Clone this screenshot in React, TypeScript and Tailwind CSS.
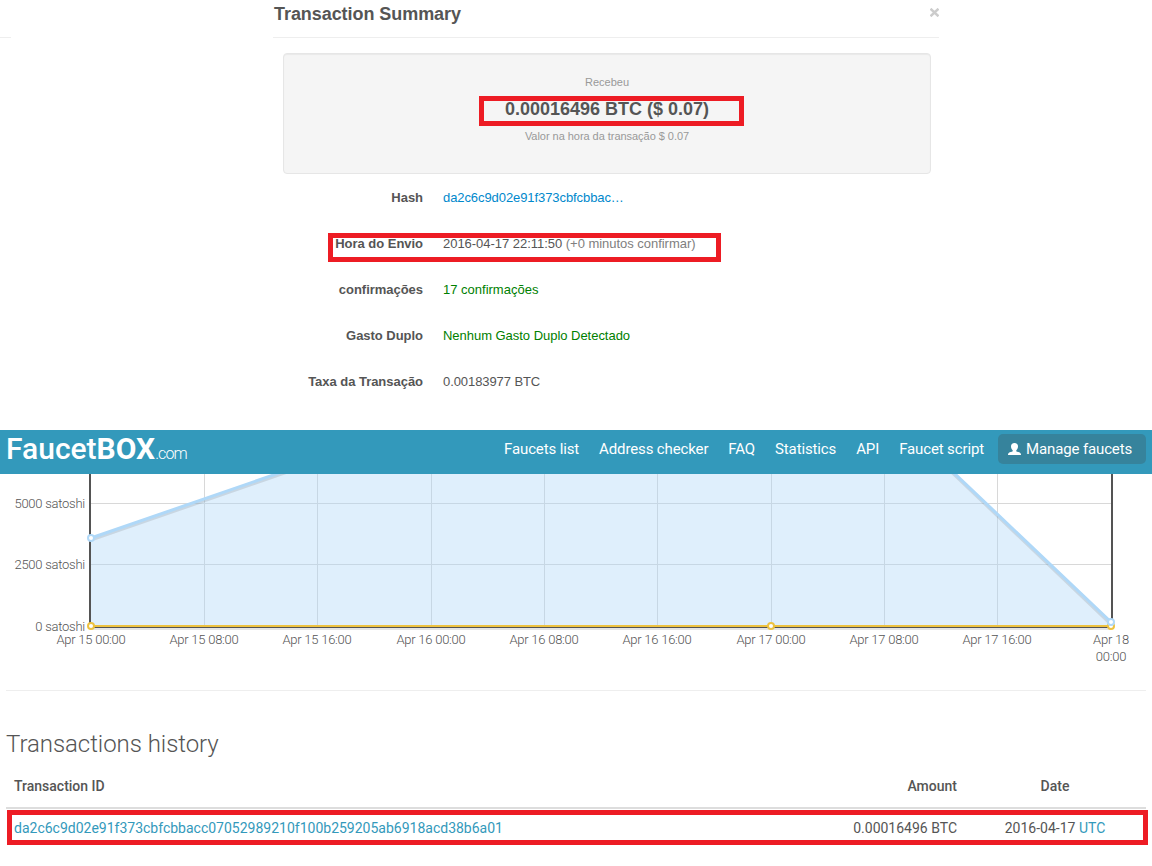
const details = [
  { label: "Hash", value: "da2c6c9d02e91f373cbfcbbac…", color: "text-[#0088cc] tracking-[-0.08px]" },
  { label: "Hora do Envio", value: "2016-04-17 22:11:50", note: "(+0 minutos confirmar)", color: "text-[#555] tracking-[-0.03px]" },
  { label: "confirmações", value: "17 confirmações", color: "text-[#008000]" },
  { label: "Gasto Duplo", value: "Nenhum Gasto Duplo Detectado", color: "text-[#008000] tracking-[-0.03px]" },
  { label: "Taxa da Transação", value: "0.00183977 BTC", color: "text-[#555] tracking-[-0.08px]" },
];

const navLinks = ["Faucets list", "Address checker", "FAQ", "Statistics", "API", "Faucet script"];

const xTicks = [
  { x: 91, label: "Apr 15 00:00" },
  { x: 204, label: "Apr 15 08:00" },
  { x: 317, label: "Apr 15 16:00" },
  { x: 431, label: "Apr 16 00:00" },
  { x: 544, label: "Apr 16 08:00" },
  { x: 657, label: "Apr 16 16:00" },
  { x: 771, label: "Apr 17 00:00" },
  { x: 884, label: "Apr 17 08:00" },
  { x: 997, label: "Apr 17 16:00" },
];

const yTicks = [
  { y: 29, label: "5000 satoshi" },
  { y: 90, label: "2500 satoshi" },
  { y: 152, label: "0 satoshi" },
];

const TransactionSummary = () => (
  <section className="flex h-[430px] items-start font-['Liberation_Sans',sans-serif] text-[#555]">
    <div className="mt-[37px] h-px w-[11px] bg-[#eee]" />
    <div className="ml-[262px] w-[666px]">
      <div className="flex h-[38px] justify-between border-b border-[#eee] pl-px">
        <h3 className="mt-1 text-[18px] leading-5 font-bold tracking-[-0.06px]">Transaction Summary</h3>
        <svg className="mt-2 h-[9px] w-[9px]" viewBox="0 0 9 9">
          <path d="M0.5 0.8L8.5 8.2M8.5 0.8L0.5 8.2" stroke="#ccc" strokeWidth="2.6" />
        </svg>
      </div>

      {/* Amount received */}
      <div className="mt-[15px] ml-[10px] h-[121px] w-[648px] rounded border border-[#e6e6e6] bg-[#f5f5f5] pt-[20px] text-center shadow-[inset_0_1px_1px_rgba(0,0,0,0.05)]">
        <p className="text-[11px] leading-4 text-[#999]">Recebeu</p>
        <div className="relative mt-[9px] h-5">
          <p className="text-[18px] leading-5 font-bold">0.00016496 BTC ($ 0.07)</p>
          <div className="absolute -top-[3px] left-[195px] h-[30px] w-[265px] border-[5px] border-[#ed1c24]" />
        </div>
        <p className="mt-[9px] text-[11px] leading-4 tracking-[-0.04px] text-[#999]">Valor na hora da transação $ 0.07</p>
      </div>

      <dl className="mt-[14px] text-[13px] leading-5">
        {details.map((row) => (
          <div key={row.label} className="relative mb-[26px] flex h-5">
            <dt className="w-[150px] text-right font-bold tracking-[-0.03px]">{row.label}</dt>
            <dd className={`ml-5 whitespace-nowrap ${row.color}`}>
              {row.value}
              {row.note && <span className="text-[#808080]"> {row.note}</span>}
            </dd>
            {row.note && (
              <div className="absolute -top-px left-[55px] h-[29px] w-[393px] border-[5px] border-[#ed1c24]" />
            )}
          </div>
        ))}
      </dl>
    </div>
  </section>
);

const UserIcon = () => (
  <svg className="mr-[5px] h-3 w-[13px]" viewBox="0 0 13 12" fill="currentColor">
    <path d="M6.5 0C4.3 0 3 1.4 3 3.3c0 1.6.6 3 1.7 3.900v1.100C4.300 9 1 9.200.3 10.400 0 10.900 0 11.400 0 12h13c0-.6 0-1.100-.3-1.600C12 9.200 8.700 9 8.300 8.300V7.200c1.100-.9 1.700-2.300 1.700-3.900C10 1.400 8.700 0 6.500 0z" />
  </svg>
);

const Navbar = () => (
  <header className="flex h-11 justify-between bg-[#3399bb] px-[6px] text-white">
    <div className="flex items-baseline whitespace-nowrap">
      <span className="text-[30px] leading-[38px] font-medium">Faucet</span>
      <span className="text-[30px] leading-[38px] font-bold">BOX</span>
      <span className="text-[16px] font-light tracking-[-0.9px]">.com</span>
    </div>
    <nav className="mt-1 flex h-[30px] items-center text-[15px] tracking-[-0.13px] whitespace-nowrap">
      {navLinks.map((link) => (
        <a key={link} className="mr-5">{link}</a>
      ))}
      <a className="-ml-[6px] flex h-[30px] w-[148px] items-center rounded-[5px] bg-[#36839c] pl-[10px]">
        <UserIcon />
        Manage faucets
      </a>
    </nav>
  </header>
);

const Chart = () => (
  <svg className="block h-[216px] w-full font-light tracking-[-0.25px]" viewBox="0 0 1152 216" fontSize="13" fill="#545454">
    {xTicks.slice(1).map((tick) => (
      <rect key={tick.x} x={tick.x} y="0" width="1" height="152" fill="#d8d8d8" />
    ))}
    {yTicks.slice(0, 2).map((tick) => (
      <rect key={tick.y} x="91" y={tick.y} width="1020" height="1" fill="#d8d8d8" />
    ))}
    <path d="M91 64L276 0H955L1111 148V152H91Z" fill="#afd8f8" fillOpacity="0.4" />
    <rect x="89" y="0" width="2" height="154" fill="#545454" />
    <rect x="1111" y="0" width="2" height="154" fill="#545454" />
    <rect x="89" y="152" width="1024" height="2" fill="#545454" />

    {/* payouts */}
    <g fill="none">
      <path d="M91 66.3L286 -1.200M951 -2L1110 149.800" stroke="#000" strokeOpacity="0.1" strokeWidth="2.500" />
      <path d="M91 64L282 -2M953 -2L1111 148" stroke="#afd8f8" strokeWidth="3" />
      <path d="M91 155H1111" stroke="#000" strokeOpacity="0.1" strokeWidth="2" />
      <path d="M91 152H1111" stroke="#edc240" strokeWidth="2" />
    </g>
    {[91, 771, 1111].map((x) => (
      <circle key={x} cx={x} cy="152" r="3" fill="#fff" stroke="#edc240" strokeWidth="2" />
    ))}
    <circle cx="91" cy="64" r="3" fill="#fff" stroke="#afd8f8" strokeWidth="2" />
    <circle cx="1111" cy="148" r="3" fill="#fff" stroke="#afd8f8" strokeWidth="2" />

    {yTicks.map((tick) => (
      <text key={tick.label} x="85" y={tick.y + 5} textAnchor="end">{tick.label}</text>
    ))}
    {xTicks.map((tick) => (
      <text key={tick.label} x={tick.x} y="170" textAnchor="middle">{tick.label}</text>
    ))}
    <text x="1111" y="170" textAnchor="middle">Apr 18</text>
    <text x="1111" y="187" textAnchor="middle">00:00</text>
  </svg>
);

const History = () => (
  <section className="mx-[6px] border-t border-[#eee] text-[14px] leading-5 text-[#555]">
    <h2 className="mt-[39px] text-[24px] leading-7 font-light tracking-[-0.05px]">Transactions history</h2>
    <div className="mt-[18px] flex h-[33px] border-b-2 border-[#ddd] pl-2 font-medium">
      <span className="w-[780px]">Transaction ID</span>
      <span className="w-[163px] text-right">Amount</span>
      <span className="ml-[7px] w-[182px] text-center">Date</span>
    </div>
    <div className="relative flex h-[38px] items-center pl-2">
      <a className="w-[780px] text-[#3399bb]">da2c6c9d02e91f373cbfcbbacc07052989210f100b259205ab6918acd38b6a01</a>
      <span className="w-[163px] text-right">0.00016496 BTC</span>
      <span className="ml-[7px] w-[182px] text-center">
        2016-04-17 <a className="text-[#3399bb]">UTC</a>
      </span>
      <div className="absolute top-[1px] left-[1px] h-[35px] w-[1141px] border-[5px] border-[#ed1c24]" />
    </div>
  </section>
);

export default function App() {
  return (
    <div className="h-[866px] w-[1152px] overflow-hidden bg-white font-['Roboto',sans-serif]">
      <TransactionSummary />
      <Navbar />
      <Chart />
      <History />
    </div>
  );
}
